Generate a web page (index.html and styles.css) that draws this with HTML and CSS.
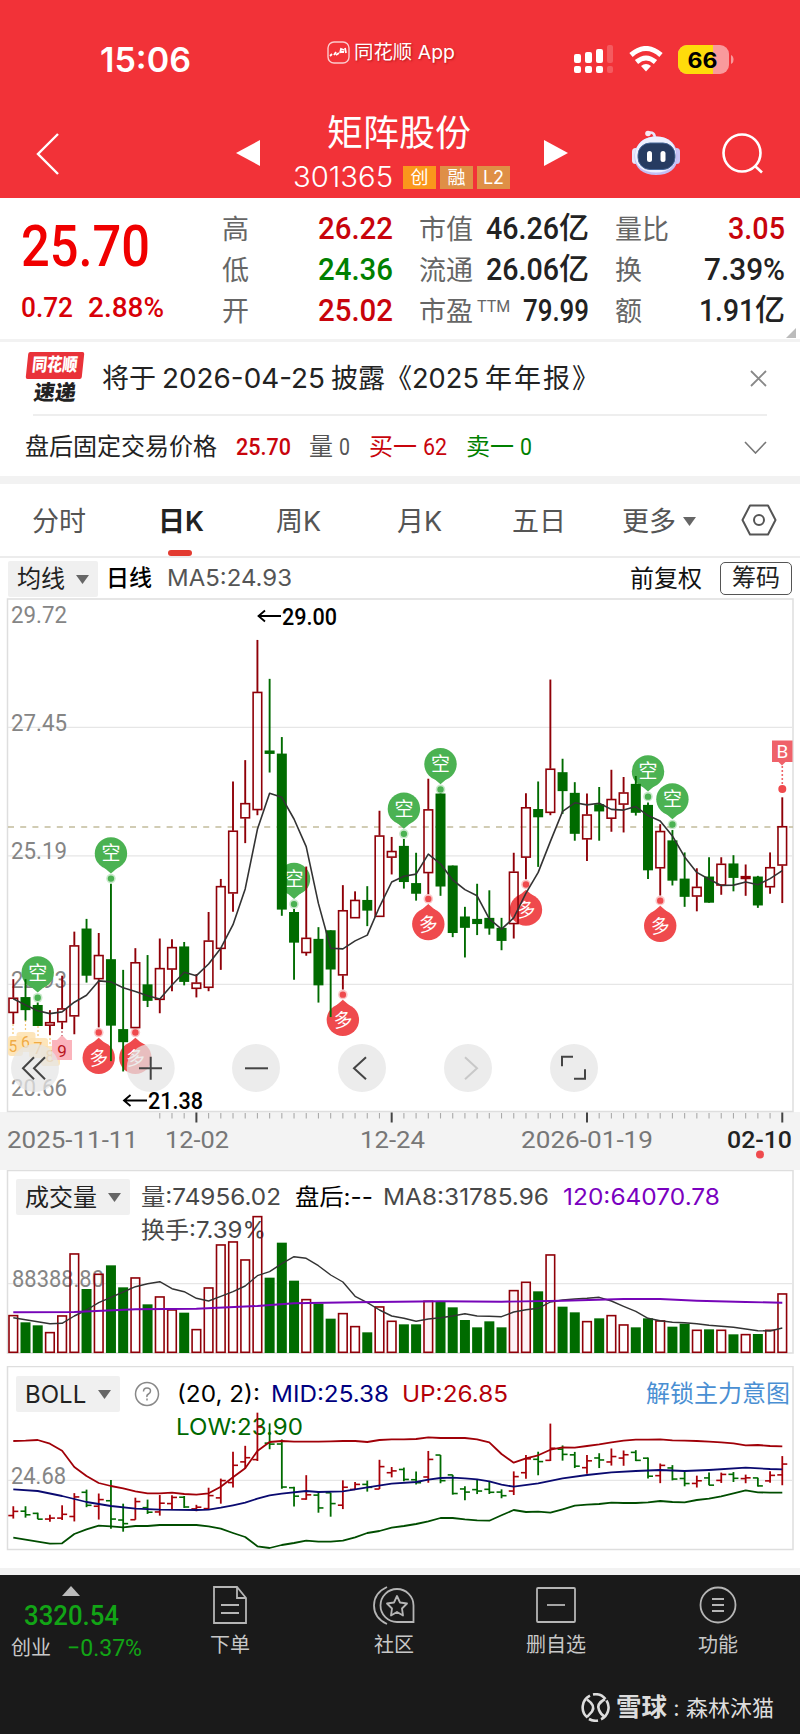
FILE: index.html
```html
<!DOCTYPE html>
<html lang="zh-CN">
<head>
<meta charset="utf-8">
<title>矩阵股份 301365</title>
<link rel="stylesheet" href="styles.css">
</head>
<body>
<header class="top">
  <div class="status">
    <span class="clock fit" data-w="91">15:06</span>
    <span class="brand">
      <svg width="23" height="23" viewBox="0 0 23 23" fill="none" stroke="#fff"><rect x="1" y="1" width="21" height="21" rx="6" stroke-opacity=".75" stroke-width="1.4"/><path d="M3 15l2-2M7 14l2-3M9 14l3-2M13 12l1-4 3 1M14 11h3M18 7l1 5" stroke-width="1.8"/></svg>
      <span class="fit" data-w="101">同花顺 App</span>
    </span>
    <svg class="signal" width="40" height="28" viewBox="0 0 40 28" fill="#fff"><rect x="0" y="9" width="7" height="9" rx="2"/><rect x="11" y="7" width="7" height="11" rx="2"/><rect x="22" y="4" width="7" height="14" rx="2"/><rect x="33" y="0" width="6" height="18" rx="2" opacity=".2"/><rect x="0" y="21" width="7" height="7" rx="2"/><rect x="11" y="21" width="7" height="7" rx="2"/><rect x="22" y="21" width="7" height="7" rx="2"/><rect x="33" y="21" width="6" height="7" rx="2" opacity=".2"/></svg>
    <svg class="wifi" width="34" height="26" viewBox="0 0 34 26" fill="none" stroke="#fff" stroke-width="5"><path d="M2 9Q17-4 32 9M7.500 16Q17 8 26.500 16"/><path d="M17 25.500l-5-5.500q5-4 10 0z" fill="#fff" stroke="none"/></svg>
    <svg class="battery" width="56" height="29" viewBox="0 0 56 29"><defs><clipPath id="bat"><rect width="51" height="29" rx="9"/></clipPath></defs><g clip-path="url(#bat)"><rect width="51" height="29" fill="#f99a9c"/><rect x="0" width="35" height="29" fill="#fedc0b"/></g><path d="M53 10q2.500 1 2.500 4.500T53 19z" fill="#f99a9c"/><text x="9.500" y="22.500" textLength="30" lengthAdjust="spacingAndGlyphs" class="bat-text">66</text></svg>
  </div>
  <div class="nav">
    <svg class="back" width="24" height="42" viewBox="0 0 24 42" fill="none" stroke="#fff" stroke-width="2.400"><path d="M22 1L2 21l20 20"/></svg>
    <svg class="prev" width="24" height="26" viewBox="0 0 24 26" fill="#fff"><path d="M24 0v26L0 13z"/></svg>
    <div class="name">
      <div class="title">矩阵股份</div>
      <div class="code"><span class="fit" data-w="100">301365</span><i class="tag hot">创</i><i class="tag">融</i><i class="tag">L2</i></div>
    </div>
    <svg class="next" width="24" height="26" viewBox="0 0 24 26" fill="#fff"><path d="M0 0v26l24-13z"/></svg>
    <svg class="robot" width="50" height="46" viewBox="0 0 50 46"><path d="M17 3q7-2 7 6" stroke="#e8e6fc" stroke-width="2.500" fill="none"/><circle cx="17" cy="3.500" r="2.800" fill="#f8e9f4"/><rect x="1" y="18" width="7" height="16" rx="3.500" fill="#e6e6fa"/><rect x="42" y="18" width="7" height="16" rx="3.500" fill="#c9c6f6"/><path d="M25 6.500C39 6.500 46.500 15 46.500 27S38 45 25 45 3.500 38 3.500 27 11 6.500 25 6.500z" fill="#c3bff5"/><path d="M25 6.500C38 6.500 45 14 45 25S38 42.500 25 42.500 4 36 4 26 11 6.500 25 6.500z" fill="#eef1ff"/><rect x="7" y="13" width="37" height="26.500" rx="12" fill="#263b61" stroke="#456698"/><rect x="16" y="21" width="5" height="11" rx="2.500" fill="#fff"/><rect x="29.500" y="21" width="5" height="11" rx="2.500" fill="#fff"/></svg>
    <svg class="search" width="42" height="42" viewBox="0 0 42 42" fill="none" stroke="#fff" stroke-width="2.600"><circle cx="20" cy="20" r="18.500"/><path d="M33 33l7 6.500"/></svg>
  </div>
</header>

<section class="quote">
  <div class="price">
    <div class="last"><span class="fit" data-w="129">25.70</span></div>
    <div class="delta"><span class="fit" data-w="52">0.72</span><span class="fit" data-w="76">2.88%</span></div>
  </div>
  <dl class="stats s1">
    <dt>高</dt><dd class="up"><span class="fit" data-w="75">26.22</span></dd>
    <dt>低</dt><dd class="down"><span class="fit" data-w="75">24.36</span></dd>
    <dt>开</dt><dd class="up"><span class="fit" data-w="75">25.02</span></dd>
  </dl>
  <dl class="stats s2">
    <dt>市值</dt><dd><span class="fit" data-w="73">46.26</span><em>亿</em></dd>
    <dt>流通</dt><dd><span class="fit" data-w="73">26.06</span><em>亿</em></dd>
    <dt>市盈<sup>TTM</sup></dt><dd><span class="fit" data-w="66">79.99</span></dd>
  </dl>
  <dl class="stats s3">
    <dt>量比</dt><dd class="up"><span class="fit" data-w="57">3.05</span></dd>
    <dt>换</dt><dd><span class="fit" data-w="81">7.39%</span></dd>
    <dt>额</dt><dd><span class="fit" data-w="56">1.91</span><em>亿</em></dd>
  </dl>
  <svg class="corner" width="10" height="10"><path d="M10 0v10H0z" fill="#bbb"/></svg>
</section>

<section class="news">
  <div class="flag"><span class="flag-top"><span class="fit" data-w="47">同花顺</span></span><span class="flag-bottom">速递</span></div>
  <div class="headline"><span>将于</span><span class="fit" data-w="163">2026-04-25</span><span>披露《</span><span class="fit" data-w="67">2025</span><span class="tail">年年报》</span></div>
  <svg class="close" width="17" height="17" viewBox="0 0 17 17" stroke="#888" stroke-width="1.800"><path d="M1 1l15 15M16 1L1 16"/></svg>
</section>
<section class="after">
  <span class="lbl">盘后固定交易价格</span>
  <b class="up fit" data-w="55">25.70</b>
  <span class="grey">量 <span class="fit" data-w="11">0</span></span>
  <span class="up">买一 <span class="fit" data-w="24">62</span></span>
  <span class="down">卖一 <span class="fit" data-w="12">0</span></span>
  <svg class="chev" width="23" height="13" viewBox="0 0 23 13" fill="none" stroke="#777" stroke-width="1.600"><path d="M1 1l10.500 11L22 1"/></svg>
</section>
<nav class="tabs">
  <span>分时</span><span class="on">日K</span><span>周K</span><span>月K</span><span>五日</span>
  <span>更多<svg width="13" height="9"><path d="M0 0h13l-6.500 9z" fill="#666"/></svg></span>
  <svg class="hex" width="36" height="32" viewBox="0 0 36 32" fill="none" stroke="#555" stroke-width="2"><path d="M9 1.500h18L34.500 16 27 30.500H9L1.500 16z" stroke-linejoin="round"/><circle cx="18" cy="16" r="5"/></svg>
</nav>
<div class="ma">
  <span class="drop">均线<svg width="13" height="9"><path d="M0 0h13l-6.500 9z" fill="#666"/></svg></span>
  <span class="ma-name">日线</span>
  <span class="ma-val fit" data-w="125">MA5:24.93</span>
  <span class="adj">前复权</span>
  <span class="chip">筹码</span>
</div>

<section class="kline"><svg id="k" width="800" height="572" viewBox="0 598 800 572"></svg></section>

<section class="panel vol">
  <div class="legend">
    <span class="drop">成交量<svg width="13" height="9"><path d="M0 0h13l-6.500 9z" fill="#666"/></svg></span>
    <span class="fit grey2" data-w="140">量:74956.02</span>
    <span class="fit black" data-w="78">盘后:--</span>
    <span class="fit grey2" data-w="166">MA8:31785.96</span>
    <span class="fit purple" data-w="157">120:64070.78</span>
    <span class="second fit grey2" data-w="125">换手:7.39%</span>
  </div>
  <svg id="v" width="800" height="184" viewBox="0 1170 800 184"></svg>
</section>

<section class="panel boll">
  <div class="legend">
    <span class="drop">BOLL<svg width="13" height="9"><path d="M0 0h13l-6.500 9z" fill="#666"/></svg></span>
    <svg class="help" width="26" height="26" viewBox="0 0 26 26" fill="none" stroke="#888" stroke-width="1.500"><circle cx="13" cy="13" r="11.500"/><path d="M9.500 10.500q0-3.500 3.500-3.500t3.500 3q0 2-2 3t-1.500 3M13 17.500v2"/></svg>
    <span class="fit black" data-w="83">(20, 2):</span>
    <span class="fit navy" data-w="118">MID:25.38</span>
    <span class="fit red" data-w="106">UP:26.85</span>
    <span class="unlock">解锁主力意图</span>
    <span class="second fit green" data-w="127">LOW:23.90</span>
  </div>
  <svg id="b" width="800" height="186" viewBox="0 1366 800 186"></svg>
</section>

<footer class="dock">
  <div class="index">
    <svg width="18" height="10"><path d="M9 0l9 10H0z" fill="#bbb"/></svg>
    <div class="idx-val"><span class="fit" data-w="95">3320.54</span></div>
    <div class="idx-row"><span>创业</span><span class="idx-pct fit" data-w="75">−0.37%</span></div>
  </div>
  <div class="item"><svg width="36" height="40" viewBox="0 0 36 40"><path d="M2 2h23l9 11v25H2zM25 2v11h9M9 20h18M9 28h18"/></svg>下单</div>
  <div class="item"><svg width="42" height="40" viewBox="0 0 42 40"><path d="M24 4a16.500 16.500 0 1 0 0 33h16.500V20.500A16.500 16.500 0 0 0 24 4zM14 2Q1 8 1 20.500T14 39"/><path d="M24 11l3 6.500 7 1-5 5 1 7-6-3.500-6 3.500 1-7-5-5 7-1z" stroke-linejoin="round"/></svg>社区</div>
  <div class="item"><svg width="40" height="40" viewBox="0 0 40 40"><rect x="1" y="3" width="38" height="34" rx="1"/><path d="M11 20h18"/></svg>删自选</div>
  <div class="item"><svg width="40" height="40" viewBox="0 0 40 40"><circle cx="20" cy="20" r="17.500"/><path d="M14 14h12M14 20h12M14 26h12"/></svg>功能</div>
  <div class="credit">
    <svg width="29" height="29" viewBox="0 0 29 29" fill="none" stroke="#ddd" stroke-width="2.600"><path d="M9 2.700A13 13 0 0 0 6.500 24.500M12 1.500A13 13 0 0 1 24.500 6M20 26.300A13 13 0 0 0 25.500 7.500M17 27.500A13 13 0 0 1 8 26"/><path d="M6 6.500q9 6 5 12l-5 5.500M24 6q-9 5-6 11 2 5 6 7"/></svg>
    <b class="fit" data-w="51">雪球</b><span class="colon">:</span><span>森林沐猫</span>
  </div>
</footer>
<script src="app.js"></script>
</body>
</html>
```
FILE: styles.css
```css
* { box-sizing: border-box; }
body { margin: 0; width: 800px; background: #fff; color: #222; font-family: Inter, "Noto Sans CJK SC", sans-serif; line-height: 1; }
svg { display: block; flex: none; }
.fit { display: inline-block; justify-self: start; white-space: nowrap; transform-origin: 0 50%; }
.up { color: #c8040c; }
.down { color: #008000; }

.top { height: 198px; background: #f23238; color: #fff; display: flex; flex-direction: column; }
.status { height: 108px; display: flex; align-items: flex-start; }
.clock { margin: 43px 0 0 100px; font-size: 34px; font-weight: 600; }
.brand { margin: 39px 0 0 136px; display: flex; align-items: center; gap: 4px; font-size: 19px; text-shadow: 1px 1px 2px #8008; height: 26px; }
.signal { margin: 45px 0 0 119px; }
.wifi { margin: 46px 0 0 15px; }
.battery { margin: 45px 0 0 15px; }
.bat-text { font: 700 21.500px Inter, sans-serif; fill: #000; }
.nav { height: 90px; display: flex; align-items: flex-start; }
.back { margin: 25px 0 0 36px; }
.prev { margin: 32px 0 0 176px; }
.name { width: 220px; margin: 7px 0 0 33px; }
.title { font-size: 36px; padding-left: 34px; height: 46px; }
.code { display: flex; align-items: center; height: 32px; font-size: 28px; font-weight: 300; }
.tag { width: 33px; height: 23px; margin-left: 4px; background: #df8f46; font: 400 18px/23px Inter, "Noto Sans CJK SC", sans-serif; text-align: center; }
.tag.hot { background: #fa971c; margin-left: 10px; }
.next { margin: 32px 0 0 31px; }
.robot { margin: 22px 0 0 63px; }
.search { margin: 25px 0 0 41px; }

.quote { height: 144px; display: grid; grid-template-columns: 201px 193px 196px 189px; padding-left: 21px; border-bottom: 3px solid #f2f2f2; position: relative; font-family: Roboto, "Noto Sans CJK SC", sans-serif; }
.last { height: 90px; padding-top: 18px; color: #f00000; font-size: 58px; font-weight: 500; }
.last .fit { line-height: 60px; }
.delta { display: flex; gap: 15px; font-size: 28px; font-weight: 500; color: #d80008; padding-top: 6px; }
.stats { margin: 10px 0 0; display: grid; grid-auto-rows: 41px; align-items: center; }
.s1 { grid-template-columns: 30px 1fr; padding-right: 22px; }
.s2 { grid-template-columns: 60px 1fr; padding: 0 22px 0 4px; }
.s3 { grid-template-columns: 60px 1fr; padding: 0 15px 0 4px; }
dt { font-size: 27px; color: #666; font-weight: 400; white-space: nowrap; padding-top: 3px; }
dt sup { font-size: 16px; vertical-align: 9px; margin-left: 4px; line-height: 0; }
dd { margin: 0; display: flex; justify-content: flex-end; align-items: center; font-size: 32px; font-weight: 500; padding-bottom: 1px; }
dd em { font-style: normal; font-size: 30px; font-weight: 500; }
.corner { position: absolute; right: 4px; bottom: 1px; }

.news { height: 74px; margin: 0 33px; border-bottom: 2px solid #eee; display: flex; align-items: center; }
.flag { margin: -1px 0 0 -8px; width: 59px; height: 52px; flex: none; display: flex; flex-direction: column; align-items: center; font-weight: 900; }
.flag-top { width: 56px; height: 27px; background: #e93239; border-radius: 2px; transform: skewX(-6deg); color: #fff; font-size: 18px; padding-top: 4px; text-align: center; }
.flag-bottom { font-size: 21px; transform: skewX(-8deg); margin-top: 3px; color: #222; }
.headline { margin-left: 18px; font-size: 27px; color: #222; display: flex; align-items: center; white-space: nowrap; padding-top: 1px; }
.headline .fit { margin: 0 6px; }
.headline .fit:nth-child(4) { margin: 0 6px 0 0; }
.headline .tail { letter-spacing: 2px; }
.close { margin-left: auto; }
.after { height: 62px; padding: 0 33px 0 25px; display: flex; align-items: center; font-family: Roboto, "Noto Sans CJK SC", sans-serif; font-size: 24px; color: #222; white-space: nowrap; margin-bottom: -2px; }
.after .lbl { width: 192px; }
.after b { font-weight: 500; margin-right: 18px; }
.after > span { margin-right: 19px; }
.grey { color: #555; }
.chev { margin-left: auto; }
.tabs { height: 82px; border-top: 8px solid #f2f2f2; border-bottom: 2px solid #ececec; display: grid; grid-template-columns: 126px 118px 121px 115px 110px 120px 1fr; padding-left: 32px; align-items: center; font-size: 27px; color: #555; }
.tabs span { display: flex; align-items: center; gap: 7px; height: 72px; position: relative; padding-top: 2px; }
.tabs .hex { margin-left: -1px; }
.tabs .on { color: #222; font-weight: 600; }
.tabs .on::after { content: ""; position: absolute; left: 10px; bottom: 0; width: 24px; height: 6px; border-radius: 3px; background: #e33b30; }
.ma { height: 40px; display: flex; align-items: center; padding: 1px 8px 0 8px; font-size: 24px; white-space: nowrap; }
.drop { background: #f0f0f0; height: 36px; display: flex; align-items: center; justify-content: space-between; padding: 1px 9px 0 9px; font-size: 24px; color: #222; border-radius: 2px; }
.ma .drop { width: 90px; }
.ma-name { margin: 0 15px 0 8px; color: #000; font-size: 23px; font-weight: 500; }
.ma-val { color: #555; font-size: 23px; }
.adj { margin-left: auto; color: #111; }
.chip { margin-left: 18px; width: 72px; height: 33px; border: 1.5px solid #555; border-radius: 5px; text-align: center; line-height: 29px; }

.kline { height: 572px; }
.panel { display: grid; }
.panel > * { grid-area: 1 / 1; }
.vol { height: 184px; margin-bottom: 12px; }
.boll { height: 186px; }
.legend { position: relative; height: 74px; padding: 9px 0 0 16px; display: grid; grid-template-rows: 36px 30px; align-items: center; font-size: 23px; z-index: 0; }
.panel > svg { position: relative; z-index: 1; }
.vol .legend { grid-template-columns: 125px 154px 88px 180px 1fr; }
.vol .drop { width: 114px; }
.vol .second { grid-row: 2; grid-column: 2; }
.boll .legend { grid-template-columns: 118px 43px 94px 131px 1fr 154px; padding-top: 10px; }
.boll .drop { width: 104px; }
.boll .second { grid-row: 2; grid-column: 3; margin-left: -1px; }
.unlock { font-size: 24px; color: #4a8fd3; font-weight: 400; white-space: nowrap; }
.grey2 { color: #484848; } .black { color: #000; } .purple { color: #7a00c0; } .navy { color: #000080; } .red { color: #b40008; } .green { color: #006800; }

.num { font-family: Roboto, sans-serif; }
.axis { fill: #858585; font-size: 24px; }
.ann { fill: #000; font-size: 24px; font-weight: 500; }
.date { fill: #777; font-size: 24px; }
.date.now { fill: #222; font-weight: 500; }
.pin { fill: #fff; font: 400 19px "Noto Sans CJK SC", sans-serif; text-anchor: middle; }

.dock { margin-top: 16px; border-top: 7px solid #f2f2f2; background: #1a1a1a; height: 166px; display: grid; grid-template-columns: 142px 176px 152px 172px 152px; grid-template-rows: 100px 1fr; color: #c8c8c8; font-size: 20px; }
.index { display: flex; flex-direction: column; align-items: center; padding-top: 11px; font-family: Roboto, "Noto Sans CJK SC", sans-serif; }
.idx-val { color: #12a516; font-size: 28px; font-weight: 500; height: 30px; margin-top: 4px; }
.idx-val .fit { margin-top: 2px; }
.idx-row { display: flex; align-items: center; margin-top: 4px; gap: 16px; width: 120px; height: 28px; }
.idx-row span { white-space: nowrap; }
.idx-pct { color: #12a516; font-size: 24px; }
.item { display: flex; flex-direction: column; align-items: center; padding-top: 10px; gap: 10px; }
.item svg { fill: none; stroke: #b5b5b5; stroke-width: 1.800; }
.credit { grid-column: 1 / -1; display: flex; align-items: center; justify-content: flex-end; padding: 6px 20px 0 0; font-size: 22px; color: #ddd; }
.credit b { font-size: 25px; font-weight: 700; margin-left: 6px; }
.credit .colon { width: 19px; text-align: center; }
```
FILE: app.js
```js
document.querySelectorAll('.fit').forEach(function (el) {
  el.dataset.n = el.getBoundingClientRect().width;
});
document.querySelectorAll('.fit').forEach(function (el) {
  var w = +el.dataset.w;
  el.style.width = w + 'px';
  el.style.flex = 'none';
  el.style.transform = 'scaleX(' + (w / el.dataset.n) + ')';
});

var RED = '#8f0008', GREEN = '#006b00';
function X(i) { return 13.3 + i * 12.206; }
// Price rows are stored in chart units measured down from the top of the plot.
function Y(v) { return 590 + v / 2.9037; }

// Candles: colour, high, body top, body bottom, low.
var C = ('r1130,1184,1228,1260 g1130,1182,1220,1250 g1198,1205,1266,1266 r1220,1255,1265,1292 r1120,1215,1255,1275 r992,1032,1238,1290 g955,983,1120,1140 r996,1060,1130,1270 ' +
'g853,1072,1265,1368 g1103,1275,1313,1398 r1040,1081,1272,1272 g1060,1145,1193,1211 r1012,1098,1190,1229 r1014,1037,1102,1165 g1022,1035,1138,1148 r1115,1140,1158,1183 ' +
'r935,1018,1155,1165 r839,860,1042,1103 r556,699,881,934 r494,619,663,735 r145,296,639,654 g258,466,476,530 g427,475,928,946 g926,935,1024,1132 r803,1010,1054,1062 ' +
'g979,1013,1148,1198 g988,988,1102,1240 r857,930,1119,1160 r875,900,953,953 g860,900,931,976 r641,713,949,949 r717,758,777,826 g723,743,848,867 g763,851,882,902 ' +
'r548,637,822,883 g591,591,861,888 g800,800,996,1008 g920,948,981,1067 g853,955,970,1002 g872,952,983,1001 g952,981,1019,1046 r763,818,970,1012 r590,631,777,840 ' +
'g556,636,660,804 r260,519,647,654 g490,529,584,650 g558,589,708,728 r591,652,724,787 g572,622,643,728 r522,607,664,702 r543,588,623,704 g540,563,647,655 ' +
'g617,624,814,839 r680,700,808,887 g697,727,844,858 g762,838,891,920 r808,862,890,933 g776,832,908,908 r776,795,858,885 g770,794,836,875 r797,831,839,888 ' +
'g830,832,916,923 r762,805,863,882 r602,686,800,909').split(' ').map(function (s) { return [s[0]].concat(s.slice(1).split(',').map(Number)); });
var MA = [1187,1205,1222,1230,1225,1197,1177,1135,1138,1155,1166,1178,1188,1147,1110,1120,1086,1040,972,868,695,590,602,665,745,910,1040,1042,1019,1002,920,848,831,825,767,795,842,870,888,955,985,952,880,820,730,643,618,624,619,637,639,629,655,671,714,775,820,840,858,857,848,856,838,815];
var V = [646,667,676,697,647,461,567,522,496,562,533,613,590,629,638,688,563,434,425,479,349,533,428,542,598,611,656,640,679,697,620,663,673,673,603,603,622,660,682,664,682,571,546,574,464,620,637,664,655,646,674,682,655,662,680,671,690,688,690,703,703,702,690,581];
var VM = [653,659,665,671,670,648,630,608,592,576,560,551,545,566,575,595,603,589,575,558,527,515,491,470,475,497,525,546,589,608,630,648,655,664,657,653,648,641,648,649,650,636,629,625,606,600,597,595,592,603,619,634,655,662,667,668,671,676,679,682,687,692,693,684];
var UP = [243,242,240,251,272,321,348,369,378,385,394,400,400,398,402,404,400,380,352,325,273,246,243,245,245,245,244,243,243,246,240,238,238,237,232,234,234,234,238,247,282,308,295,286,269,262,263,258,253,247,242,239,239,238,241,242,243,245,247,250,256,255,258,259];
var LO = [533,539,545,551,550,522,508,497,499,502,498,498,495,495,495,495,499,506,519,531,559,564,555,549,542,545,545,542,532,519,513,503,498,492,484,474,474,478,481,482,466,450,456,455,458,448,437,434,432,428,429,429,427,423,426,427,420,416,409,400,391,397,398,398];
var MID = [[0,388],[2,393],[4,408],[6,426],[8,438],[10,446],[12,449],[15,450],[16,449],[17,443],[18,436],[19,428],[20,416],[21,406],[22,401],[24,393],[25,396],[27,394],[29,382],[31,371],[33,366],[34,359],[35,354],[36,353],[37,355],[38,358],[39,364],[40,374],[41,380],[43,370],[45,355],[47,345],[49,337],[51,333],[53,330],[55,333],[57,330],[60,323],[62,327],[63,328]];
var V120 = [[0,637],[5,636],[10,628],[15,626],[20,618],[23,610],[28,607],[35,604],[40,605],[45,602],[50,597],[53,597],[56,602],[60,606],[63,608]];

function line(x1, y1, x2, y2, c, w, extra) {
  return '<line x1="' + x1 + '" y1="' + y1 + '" x2="' + x2 + '" y2="' + y2 + '" stroke="' + c + '" stroke-width="' + (w || 1) + '" ' + (extra || '') + '/>';
}
function rect(x, y, w, h, f, s, sw) {
  return '<rect x="' + x + '" y="' + y + '" width="' + w + '" height="' + h + '" fill="' + f + '"' + (s ? ' stroke="' + s + '" stroke-width="' + (sw || 1.3) + '"' : '') + '/>';
}
function poly(pts, base, c, w, k) {
  k = k || 3;
  return '<polyline fill="none" stroke-linejoin="round" stroke="' + c + '" stroke-width="' + w + '" points="' + pts.map(function (p, i) {
    return p.length ? X(p[0]).toFixed(1) + ',' + (base + p[1] / k).toFixed(1) : X(i).toFixed(1) + ',' + (base + p / k).toFixed(1);
  }).join(' ') + '"/>';
}
function text(t, x, y, len, cls) {
  return '<text class="num ' + cls + '" x="' + x + '" y="' + y + '" textLength="' + len + '" lengthAdjust="spacingAndGlyphs">' + t + '</text>';
}
function pin(i, dot, sell) {
  var x = X(i), d = Y(dot), c = sell ? '#4bb252' : '#ef4a4d', k = sell ? -1 : 1, cy = d + k * 25.2;
  return '<circle cx="' + x + '" cy="' + cy + '" r="16.200" fill="' + c + '"/>' +
    '<path d="M' + (x - 7) + ' ' + (cy - k * 14) + 'L' + x + ' ' + (cy - k * 20) + 'L' + (x + 7) + ' ' + (cy - k * 14) + 'z" fill="' + c + '"/>' +
    '<circle cx="' + x + '" cy="' + d + '" r="4.800" fill="' + c + '" opacity=".3"/><circle cx="' + x + '" cy="' + d + '" r="3.200" fill="' + c + '"/>' +
    '<text class="pin" x="' + x + '" y="' + (cy + 7) + '"' + (sell ? '' : ' transform="rotate(-6 ' + x + ' ' + cy + ')"') + '>' + (sell ? '空' : '多') + '</text>';
}

// Price chart
var s = rect(0, 1112, 800, 58, '#f3f3f3') + rect(7.5, 599, 785.5, 512.5, '#fff', '#dedede', 1.5);
[399, 772, 1145].forEach(function (v) { s += line(8, Y(v), 793, Y(v), '#e6e6e6', 1.3); });
s += line(8, 827, 793, 827, '#c2bc9c', 1.4, 'stroke-dasharray="6 6.200"');
s += text('29.72', 11, 623, 56, 'axis') + text('27.45', 11, 730.5, 56, 'axis') + text('25.19', 11, 859, 56, 'axis') + text('22.93', 11, 988, 56, 'axis') + text('20.66', 11, 1096, 56, 'axis');
// Sequence-count tags under the first bars
[[13, 1046, '5'], [25.5, 1042, '6'], [38, 1048, '7'], [50, 1056, '8']].forEach(function (t) {
  s += '<rect x="' + (t[0] < 14 ? 8 : t[0] - 9) + '" y="' + (t[1] - 10) + '" width="' + (t[0] < 14 ? 15 : 19) + '" height="20" rx="3" fill="#fde0ae" opacity=".85"/>' +
    line(t[0], t[1] - 22, t[0], t[1] - 10, '#f3c878', 1.2, 'stroke-dasharray="2 2"') +
    '<text class="num" x="' + t[0] + '" y="' + (t[1] + 6) + '" font-size="16" fill="#f0ab45" text-anchor="middle">' + t[2] + '</text>';
});
s += rect(52, 1040, 20, 20, '#fbb4bc') + '<path d="M57 1040l5-5 5 5z" fill="#fbb4bc"/>' + line(62, 1027, 62, 1036, '#c2606a', 1.2, 'stroke-dasharray="2 2"') + '<text class="num" x="62" y="1057" font-size="17" fill="#b91520" text-anchor="middle">9</text>';
[[2, 1184], [8, 838], [23, 912], [32, 708], [35, 579], [52, 600], [54, 681]].forEach(function (p) { s += pin(p[0], p[1], true); });
[[7, 1285], [10, 1285], [27, 1175], [34, 897], [42, 855], [53, 902]].forEach(function (p) { s += pin(p[0], p[1], false); });
C.forEach(function (c, i) {
  var x = X(i), y = c.slice(1).map(Y), col = c[0] === 'r' ? RED : GREEN;
  s += line(x, y[0], x, c[0] === 'r' ? y[1] : y[3], col, 1.9);
  if (c[0] === 'r') {
    s += line(x, y[2], x, y[3], col, 1.9) + rect(x - 4.3, y[1] + .5, 8.6, Math.max(1.5, y[2] - y[1] - 1), i === 60 ? '#b00008' : 'none', col, 1.6);
  } else s += rect(x - 5, y[1], 10, Math.max(3, y[2] - y[1]), GREEN);
});
s += poly(MA, 590, '#333', 1.6, 2.9037);
s += '<path d="M258.500 616h22.500M265 610.500l-6.500 5.500 6.500 5.500M124 1100.500h23M130.500 1095l-6.500 5.500 6.500 5.500" fill="none" stroke="#000" stroke-width="1.800"/>' + text('29.00', 282, 625, 55, 'ann') + text('21.38', 148, 1109, 55, 'ann');
s += rect(772, 740.500, 20.500, 21.500, '#ef626a') + '<path d="M778 761.500l4 4 4-4z" fill="#ef626a"/><text class="num" x="782.300" y="758" font-size="19" fill="#fff" text-anchor="middle">B</text>' +
  line(782.3, 766, 782.3, 785, '#ee6568', 1.6, 'stroke-dasharray="2 2"') + '<circle cx="782.300" cy="789" r="4" fill="#ef4a4d"/>';
for (var i = 12; i < 64; i++) s += (i === 15 || i === 31 || i === 47 || i === 63) ? line(X(i), 1112.5, X(i), 1122.5, '#444', 2) : line(X(i), 1113, X(i), 1118.5, '#aaa', 1.1);
s += text('2025-11-11', 7, 1148, 131, 'date') + text('12-02', 165, 1148, 64, 'date') + text('12-24', 360, 1148, 65, 'date') + text('2026-01-19', 521, 1148, 132, 'date') + text('02-10', 727, 1148, 65, 'date now') + '<circle cx="760" cy="1154.500" r="4" fill="#ef4a4d"/>';
[[35, 'M34 1042l-11 11 11 11M45 1042l-11 11 11 11'], [150.7, 'M139 1053h23M150.700 1041.500v23'], [256, 'M245 1053h23'], [362, 'M366 1042l-12 11 12 11'], [468, 'M465 1042l12 11-12 11'], [574, 'M562 1051v-9.500h11M585 1054v9.500h-11']].forEach(function (b, n) {
  s += '<g transform="translate(0 15.300)"><circle cx="' + b[0] + '" cy="1052.700" r="24" fill="#e6e6e6" fill-opacity=".75"/><path d="' + b[1] + '" fill="none" stroke="' + (n === 4 ? '#c8c8c8' : '#444') + '" stroke-width="2"/></g>';
});
document.getElementById('k').innerHTML = s;

// Volume
s = rect(7.5, 1170.500, 785.5, 182.500, 'none', '#dedede', 1.5) + line(8, 1283.7, 793, 1283.7, '#e6e6e6', 1.2) + text('88388.80', 12, 1287, 92, 'axis');
V.forEach(function (v, i) {
  var x = X(i), y = 1100 + v / 3;
  s += C[i][0] === 'r' ? rect(x - 4.3, y + .3, 8.6, 1352 - y, i === 34 || i === 41 || i === 42 ? '#fdf3f6' : 'none', RED, 1.6) : rect(x - 5, y, 10, 1353 - y, GREEN);
});
s += poly(VM, 1100, '#333', 1.4) + poly(V120, 1100, '#7605b8', 1.9);
document.getElementById('v').innerHTML = s;

// Bollinger bands with OHLC bars
s = rect(7.5, 1366.500, 785.5, 183, 'none', '#dedede', 1.5) + line(8, 1480.3, 793, 1480.3, '#e6e6e6', 1.2) + text('24.68', 11, 1484, 55, 'axis');
C.forEach(function (c, i) {
  var x = X(i), y = c.slice(1).map(function (v) { return 1360 + (158 + .285 * (v - 145)) / 3; }), r = c[0] === 'r', col = r ? '#a80008' : GREEN;
  s += line(x, y[0], x, y[3], col, 1.8) + line(x - 5, r ? y[2] : y[1], x, r ? y[2] : y[1], col, 1.6) + line(x, r ? y[1] : y[2], x + 5, r ? y[1] : y[2], col, 1.6);
});
s += poly(UP, 1360, '#a00008', 1.8) + poly(MID, 1360, '#0a0a70', 1.8) + poly(LO, 1360, '#004d00', 1.8);
document.getElementById('b').innerHTML = s;
```
